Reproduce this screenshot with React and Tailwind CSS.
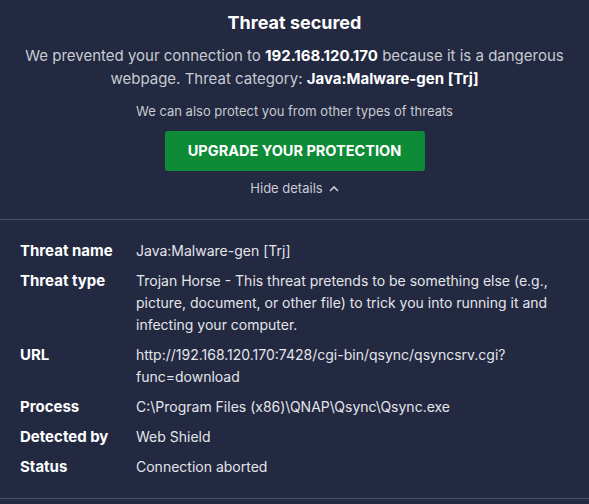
const details = [
  { label: 'Threat name', value: 'Java:Malware-gen [Trj]' },
  {
    label: 'Threat type',
    value:
      'Trojan Horse - This threat pretends to be something else (e.g., picture, document, or other file) to trick you into running it and infecting your computer.'
  },
  { label: 'URL', value: 'http://192.168.120.170:7428/cgi-bin/qsync/qsyncsrv.cgi?\nfunc=download' },
  { label: 'Process', value: 'C:\\Program Files (x86)\\QNAP\\Qsync\\Qsync.exe' },
  { label: 'Detected by', value: 'Web Shield' },
  { label: 'Status', value: 'Connection aborted' }
];

export default function App() {
  return (
    <div
      className="w-[589px] h-[504px] bg-[#222941] overflow-hidden"
      style={{ fontFamily: 'Inter, "Open Sans", sans-serif' }}
    >
      {/* Header */}
      <div className="flex flex-col items-center text-center pt-[11px]">
        <h1 className="text-[18px] font-bold text-white leading-[24px]">Threat secured</h1>
        <p className="mt-[9px] text-[15px] leading-[23px] text-[#c9cbd3] w-[560px]">
          We prevented your connection to <span className="font-bold text-white">192.168.120.170</span> because it is a
          dangerous webpage. Threat category: <span className="font-bold text-white">Java:Malware-gen [Trj]</span>
        </p>
        <p className="mt-[12px] text-[13px] leading-[18px] text-[#c9cbd3]">
          We can also protect you from other types of threats
        </p>
        <button className="mt-[11px] w-[260px] h-[40px] rounded-[3px] bg-[#0d8b36] text-white text-[14.5px] font-bold">
          UPGRADE YOUR PROTECTION
        </button>
        <button className="mt-[8px] flex items-center gap-[6px] text-[13px] text-[#c9cbd3] leading-[18px]">
          Hide details
          <svg width="10" height="7" viewBox="0 0 10 7" fill="none">
            <path d="M1 6l4-4 4 4" stroke="#c9cbd3" strokeWidth="1.6" />
          </svg>
        </button>
      </div>

      <div className="mt-[22px] border-t border-[#4a5068]" />

      {/* Details */}
      <div className="px-[20px] pt-[20px] pb-[20px] flex flex-col gap-[8px]">
        {details.map((d) => (
          <div key={d.label} className="flex leading-[22px]">
            <div className="w-[116px] shrink-0 text-[15px] font-bold text-white">{d.label}</div>
            <div className="text-[14px] text-[#e4e5ea] whitespace-pre-line">{d.value}</div>
          </div>
        ))}
      </div>

      <div className="border-t border-[#4a5068]" />
    </div>
  );
}
